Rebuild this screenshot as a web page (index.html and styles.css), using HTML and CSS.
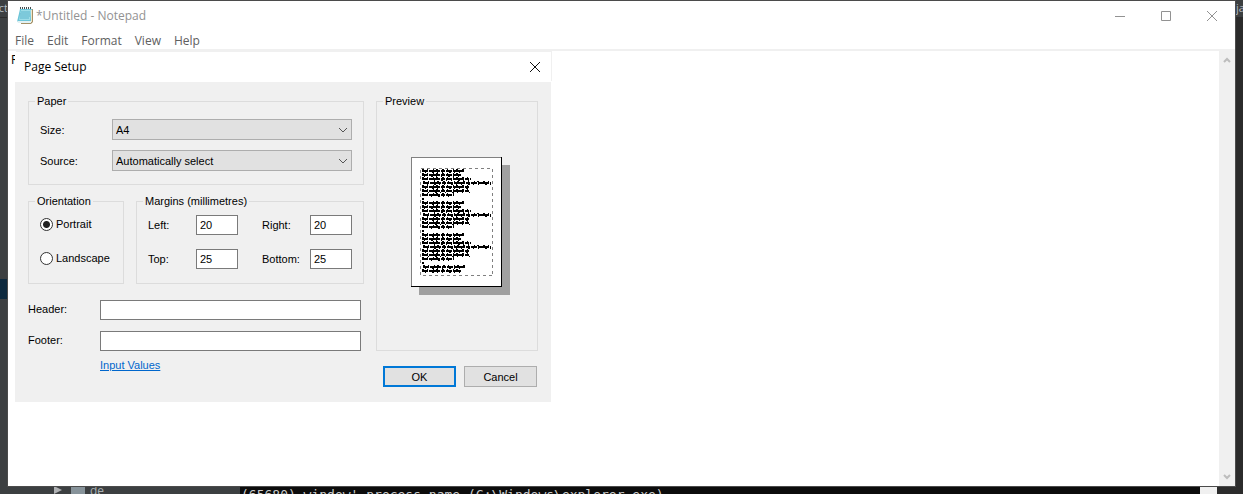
FILE: index.html
```html
<!DOCTYPE html>
<html lang="en">
<head>
<meta charset="utf-8">
<title>*Untitled - Notepad</title>
<link rel="stylesheet" href="styles.css">
</head>
<body>
<div class="desktop">
  <div class="editor-top"><span class="editor-word">ct</span><span class="editor-tab">ja</span></div>
  <div class="editor-main"><div class="editor-selection"></div><div class="editor-pane"></div></div>
  <div class="editor-bottom">
    <div class="tree">
      <svg width="36" height="12" viewBox="0 0 36 12" aria-hidden="true"><path d="M0 0L8 4L0 8Z" fill="#afb1b3"/><path d="M17 0H31V9H17Z" fill="#87939a"/></svg>
      <span>de</span>
    </div>
    <div class="console">(65680) window' process name (C:\Windows\explorer.exe)</div>
    <div class="console-scroll"></div>
    <div class="editor-edge"></div>
  </div>

  <main class="window">
    <header class="titlebar">
      <svg class="app-icon" width="16" height="17" viewBox="0 0 16 17" aria-hidden="true">
        <path d="M4 2H16V15L14 17H4Z" fill="#a39066"/>
        <path d="M3 2H15L14 15H0Z" fill="#6cc5d8"/>
        <path d="M4 3H14L13 13H2Z" fill="#9ddde8"/>
        <path d="M4 5H13M3 7H13M3 9H13M3 11H12" stroke="#5cb5cd"/>
        <path d="M0 14H14V16H1Z" fill="#e2f1f3"/>
        <path d="M14 3H15V15H14Z" fill="#eee4c9"/>
        <path d="M3 1H15" stroke="#444d50" stroke-width="2" stroke-dasharray="1 1"/>
      </svg>
      <h1>*Untitled - Notepad</h1>
      <div class="window-buttons">
        <button type="button" aria-label="Minimize"><svg width="12" height="12" viewBox="0 0 12 12"><path d="M1 6.5H11" stroke="#929292"/></svg></button>
        <button type="button" aria-label="Maximize"><svg width="12" height="12" viewBox="0 0 12 12"><path d="M1.5 1.5H10.5V10.5H1.5Z" fill="none" stroke="#929292"/></svg></button>
        <button type="button" aria-label="Close"><svg width="12" height="12" viewBox="0 0 12 12"><path d="M1 1L11 11M11 1L1 11" stroke="#929292"/></svg></button>
      </div>
    </header>
    <nav class="menubar">
      <button type="button">File</button><button type="button">Edit</button><button type="button">Format</button><button type="button">View</button><button type="button">Help</button>
    </nav>
    <div class="document">
      <textarea aria-label="Text editor" spellcheck="false">R</textarea>
      <div class="scrollbar">
        <svg width="8" height="6" viewBox="0 0 8 6" aria-hidden="true"><path d="M1 5L4 2L7 5" fill="none" stroke="#bdbdbd" stroke-width="2"/></svg>
        <svg width="8" height="6" viewBox="0 0 8 6" aria-hidden="true"><path d="M1 1L4 4L7 1" fill="none" stroke="#bdbdbd" stroke-width="2"/></svg>
      </div>
    </div>
  </main>

  <section class="dialog" role="dialog" aria-labelledby="dialog-title">
    <header class="dialog-title">
      <h2 id="dialog-title">Page Setup</h2>
      <button type="button" aria-label="Close"><svg width="12" height="12" viewBox="0 0 12 12"><path d="M1 1L11 11M11 1L1 11" stroke="#111"/></svg></button>
    </header>
    <form class="dialog-body">
      <div class="settings">
        <fieldset class="paper">
          <legend>Paper</legend>
          <div class="paper-grid">
            <label for="size">Size:</label>
            <select id="size"><option>A4</option></select>
            <label for="source">Source:</label>
            <select id="source"><option>Automatically select</option></select>
          </div>
        </fieldset>
        <div class="middle">
          <fieldset>
            <legend>Orientation</legend>
            <div class="radios">
              <label><input type="radio" name="orientation" checked>Portrait</label>
              <label><input type="radio" name="orientation">Landscape</label>
            </div>
          </fieldset>
          <fieldset>
            <legend>Margins (millimetres)</legend>
            <div class="margins">
              <label for="left">Left:</label><input id="left" type="text" value="20">
              <label class="second" for="right">Right:</label><input id="right" type="text" value="20">
              <label for="top">Top:</label><input id="top" type="text" value="25">
              <label class="second" for="bottom">Bottom:</label><input id="bottom" type="text" value="25">
            </div>
          </fieldset>
        </div>
        <div class="running">
          <label for="header">Header:</label><input id="header" type="text">
          <label for="footer">Footer:</label><input id="footer" type="text">
        </div>
        <a class="help-link" href="#values">Input Values</a>
      </div>
      <div class="side">
        <fieldset class="preview">
          <legend>Preview</legend>
          <svg width="99" height="138" viewBox="0 0 99 138" role="img" aria-label="Page preview" shape-rendering="crispEdges">
            <defs>
              <g id="block" fill="none" stroke="#000">
                <path d="M0 2H43M0 6H39M0 10H49M1 14H69M0 18H47M0 22H48M0 26H32" stroke-width="2" stroke-dasharray="6 1 11 1 4 1"/>
                <path d="M0 .5H43M0 4.5H39M0 8.5H49M1 12.5H69M0 16.5H47M0 20.5H48M0 24.5H32" stroke-dasharray="2 3 1 5 1 2 2 4"/>
                <path d="M3 3.5H43M2 7.5H39M12 11.5H49M5 15.5H69M3 19.5H47M6 23.5H48M9 27.5H32" stroke-dasharray="1 6 2 3 1 4"/>
              </g>
              <path id="dot" d="M0 29H2V31H0Z"/>
            </defs>
            <path d="M8 8H99V138H8Z" fill="#a0a0a0"/>
            <path d="M0 0H91V130H0Z" fill="#000"/>
            <path d="M0 0H90V129H0Z" fill="#808080"/>
            <path d="M1 1H90V129H1Z" fill="#fff"/>
            <path d="M9.5 11.5H81.5V118.5H9.5Z" fill="none" stroke="#808080" stroke-dasharray="3 3"/>
            <use href="#block" x="11" y="12"/><use href="#dot" x="11" y="12"/>
            <use href="#block" x="11" y="44"/><use href="#dot" x="11" y="44"/>
            <use href="#block" x="11" y="76"/><use href="#dot" x="11" y="76"/>
            <g fill="none" stroke="#000"><path d="M12 110H54M11 114H50" stroke-width="2" stroke-dasharray="6 1 11 1 4 1"/><path d="M12 108.5H54M11 112.5H50" stroke-dasharray="2 3 1 5 1 2 2 4"/><path d="M14 111.5H54M14 115.5H50" stroke-dasharray="1 6 2 3 1 4"/></g>
          </svg>
        </fieldset>
        <div class="actions">
          <button class="primary" type="button">OK</button>
          <button type="button">Cancel</button>
        </div>
      </div>
    </form>
  </section>
</div>
</body>
</html>
```
FILE: styles.css
```css
* { box-sizing: border-box; }
body { margin: 0; font: 12px/14px "Open Sans", "Noto Sans", sans-serif; color: #000; }
button, input, select, textarea { font: inherit; color: inherit; margin: 0; }
button { padding: 0; border: 0; background: none; }
h1, h2 { margin: 0; font-size: 12px; font-weight: 400; line-height: 16px; }

.desktop { position: relative; display: flex; flex-direction: column; height: 100vh; overflow: hidden; background: #3c3f41; }
.editor-top { display: flex; justify-content: space-between; height: 18px; border-bottom: 1px solid #2b2b2b; color: #b5bcc2; font-size: 11px; line-height: 15px; }
.editor-word { display: flex; justify-content: flex-end; width: 8px; }
.editor-tab { width: 7px; }
.editor-main { display: flex; flex: 1; justify-content: space-between; }
.editor-selection { width: 8px; height: 20px; margin-top: 261px; background: #0d293e; }
.editor-pane { width: 8px; background: #2b2b2b; }
.editor-bottom { display: flex; height: 8px; overflow: hidden; }
.tree { display: flex; width: 240px; padding-left: 54px; color: #a9b0b3; line-height: 9px; }
.console { flex: 1; padding-left: 1px; overflow: hidden; background: #0c0c0c; color: #ccc; font: 13px/18px "DejaVu Sans Mono", monospace; white-space: nowrap; }
.console-scroll { width: 17px; background: #f0f0f0; }
.editor-edge { width: 26px; background: #2b2b2b; }

.window { position: absolute; inset: 1px 8px 8px; display: flex; flex-direction: column; background: #fff; box-shadow: 0 0 0 1px #4b4b4b; }
.titlebar { display: flex; align-items: center; height: 29px; padding-left: 9px; color: #929292; }
.titlebar h1 { margin-left: 3px; }
.window-buttons { display: flex; margin-left: auto; }
.window-buttons button { display: grid; place-items: center; width: 46px; height: 29px; }
.menubar { display: flex; gap: 13px; height: 21px; padding-left: 7px; border-bottom: 2px solid #f0f0f0; color: #606060; }
.menubar button { line-height: 22px; }
.document { display: flex; flex: 1; min-height: 0; }
.document textarea { flex: 1; padding: 1px 3px; border: 0; outline: 0; resize: none; line-height: 16px; }
.scrollbar { display: flex; flex-direction: column; justify-content: space-between; align-items: center; width: 16px; padding: 6px 0; background: #f0f0f0; }

.dialog { position: absolute; left: 15px; top: 52px; width: 536px; background: #f0f0f0; font: 11px/14px "Liberation Sans", Arial, sans-serif; }
.dialog-title { display: flex; align-items: center; justify-content: space-between; height: 30px; padding: 0 10px 0 9px; background: #fff; box-shadow: 1px -1px #f0f0f0; font-family: "Open Sans", sans-serif; }
.dialog-title button { display: flex; }
.dialog-body { display: grid; grid-template-columns: 1fr 162px; gap: 12px; padding: 12px 13px 15px; }
fieldset { min-width: 0; margin: 0; padding: 0 11px; border: 1px solid #dcdcdc; }
legend { margin-left: -5px; padding: 0 2px; line-height: 14px; }
.settings { padding-bottom: 15px; }
.paper { margin-bottom: 9px; }
.paper-grid { display: grid; grid-template-columns: 72px 1fr; row-gap: 10px; align-items: center; padding: 11px 0 13px; }
select { appearance: none; height: 21px; padding: 0 3px; border: 1px solid #adadad; border-radius: 0; background: #e1e1e1 url("data:image/svg+xml,%3Csvg xmlns='http://www.w3.org/2000/svg' width='10' height='6'%3E%3Cpath d='M1 1L5 5L9 1' fill='none' stroke='%23555'/%3E%3C/svg%3E") no-repeat right 3px center; }
.middle { display: grid; grid-template-columns: 96px 1fr; gap: 12px; margin-bottom: 16px; }
.radios { display: grid; gap: 14px; padding: 6px 0 14px; }
.radios label { display: flex; align-items: center; gap: 3px; height: 20px; }
.radios input { appearance: none; flex: none; width: 13px; height: 13px; border: 1px solid #333; border-radius: 50%; background: #fff; }
.radios input:checked { background: radial-gradient(circle, #222 3px, #fff 4px); }
.margins { display: grid; grid-template-columns: 48px 42px 72px 42px; row-gap: 14px; align-items: center; padding: 7px 0 14px; }
.margins .second { padding-left: 24px; }
input[type="text"] { width: 100%; height: 20px; padding: 0 3px; border: 1px solid #7a7a7a; border-radius: 0; background: #fff; }
.running { display: grid; grid-template-columns: 72px 1fr; row-gap: 11px; align-items: center; margin: 0 3px 7px 0; }
.running label { padding-bottom: 3px; }
.help-link { margin-left: 72px; color: #0066cc; }
.side { display: flex; flex-direction: column; gap: 15px; }
.preview { flex: 1; }
.preview svg { display: block; margin: 49px auto 0 23px; }
.actions { display: grid; grid-template-columns: 73px 73px; gap: 8px; justify-content: end; padding-right: 1px; }
.actions button { height: 21px; border: 1px solid #adadad; background: #e1e1e1; }
.actions .primary { border: 2px solid #0078d7; }
```
